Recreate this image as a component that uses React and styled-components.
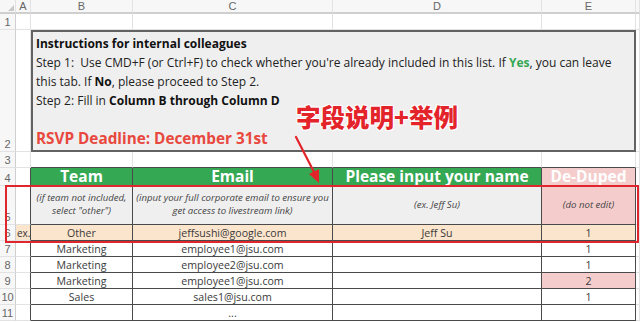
import React from "react";
import styled, { createGlobalStyle } from "styled-components";

const Global = createGlobalStyle`
  html, body { margin: 0; padding: 0; background: #fff; }
  body { font-family: "Open Sans", "Liberation Sans", sans-serif; }
`;

const DARK = "#4a4a4a";
const GRID = "#e2e2e2";

const Page = styled.div`
  position: relative;
  width: 640px;
  height: 322px;
  overflow: hidden;
`;

const Sheet = styled.div`
  display: grid;
  grid-template-columns: 16px 15px 102px 200px 209px 94px 4px;
  grid-template-rows: 14px 16px 122px 16px 18px 39px 16px 16px 16px 16px 16px 16px;
`;

const ColHead = styled.div`
  background: #f7f7f7;
  border-right: 1px solid ${GRID};
  border-bottom: 2px solid #cfcfcf;
  color: #666;
  font-size: 11px;
  line-height: 12px;
  text-align: center;
  font-family: "Liberation Sans", Arial, sans-serif;
`;

const RowNum = styled.div`
  background: #f7f7f7;
  border-right: 1px solid #cfcfcf;
  border-bottom: 1px solid ${GRID};
  color: #666;
  font-size: 11px;
  font-family: "Liberation Sans", Arial, sans-serif;
  display: flex;
  align-items: flex-end;
  justify-content: center;
  padding-bottom: 1px;
  box-sizing: border-box;
`;

const Cell = styled.div`
  box-sizing: border-box;
  background: ${(p) => p.$bg || "#fff"};
  border-right: 1px solid ${(p) => p.$rb || GRID};
  border-bottom: 1px solid ${(p) => p.$bb || GRID};
  color: ${(p) => p.$color || "#333"};
  font-size: ${(p) => (p.$left ? "10px" : "11px")};
  display: flex;
  align-items: center;
  justify-content: ${(p) => (p.$left ? "flex-start" : "center")};
  padding-left: ${(p) => (p.$left ? "1px" : "0")};
  white-space: nowrap;
  overflow: ${(p) => (p.$left ? "visible" : "hidden")};
`;

const HeadCell = styled(Cell)`
  background: ${(p) => p.$bg || "#34a853"};
  color: #fff;
  font-weight: 700;
  font-size: 15.5px;
  line-height: 17px;
  overflow: visible;
  border-right-color: ${DARK};
  border-bottom-color: ${DARK};
`;

const Note = styled(Cell)`
  background: ${(p) => p.$bg || "#efefef"};
  color: #444;
  font-style: italic;
  font-size: 9.6px;
  line-height: 13px;
  text-align: center;
  white-space: normal;
  border-right-color: ${DARK};
  border-bottom-color: ${DARK};
  padding-bottom: 2px;
`;

const Data = styled(Cell)`
  border-right-color: ${DARK};
  border-bottom-color: ${DARK};
  font-size: 10.6px;
  color: #3a3a3a;
`;

const Box = styled.div`
  grid-column: 3 / 7;
  box-sizing: border-box;
  background: #efefef;
  border: 2px solid #626262;
  padding: 2px 3px;
  font-size: 12px;
  line-height: 19px;
  color: #222;
`;

const Line = styled.div`
  white-space: nowrap;
  height: 19px;
`;

const B = styled.b`
  font-weight: 700;
  color: ${(p) => p.$color || "#111"};
`;

const Deadline = styled.div`
  margin-top: 19px;
  font-size: 15.3px;
  font-weight: 700;
  color: #e8483d;
`;

const Label = styled.div`
  position: absolute;
  left: 296px;
  top: 102px;
  font-family: "Noto Sans CJK SC", sans-serif;
  font-weight: 900;
  font-size: 24.5px;
  line-height: 30px;
  color: #e3242b;
  text-shadow: 1px 1px 0 #fff, -1px -1px 0 #fff, 1px -1px 0 #fff, -1px 1px 0 #fff;
`;

const Arrow = styled.svg`
  position: absolute;
  left: 290px;
  top: 132px;
`;

const RedFrame = styled.div`
  position: absolute;
  left: 5px;
  top: 185px;
  width: 634px;
  height: 58px;
  box-sizing: border-box;
  border: 2px solid #e0262c;
`;

const Corner = styled.div`
  position: absolute;
  left: 8px;
  top: 5px;
  width: 0;
  height: 0;
  border-left: 6px solid transparent;
  border-bottom: 6px solid #c8c8c8;
`;

const cols = ["", "A", "B", "C", "D", "E", ""];

const rows = [
  ["Marketing", "employee1@jsu.com", "", "1"],
  ["Marketing", "employee2@jsu.com", "", "1"],
  ["Marketing", "employee1@jsu.com", "", "2", "#f4cccc"],
  ["Sales", "sales1@jsu.com", "", "1"],
  ["", "...", "", ""],
];

export default function App() {
  return (
    <Page>
      <Global />
      <Sheet>
        {cols.map((c, i) => (
          <ColHead key={"h" + i}>{c}</ColHead>
        ))}

        <RowNum>1</RowNum>
        <Cell />
        <Cell />
        <Cell />
        <Cell />
        <Cell />
        <Cell />

        <RowNum>2</RowNum>
        <Cell />
        <Box>
          <Line>
            <B>Instructions for internal colleagues</B>
          </Line>
          <Line>
            Step 1:&nbsp; Use CMD+F (or Ctrl+F) to check whether you're already included in this list. If{" "}
            <B $color="#34a853">Yes</B>, you can leave
          </Line>
          <Line>
            this tab. If <B>No</B>, please proceed to Step 2.
          </Line>
          <Line>
            Step 2: Fill in <B>Column B through Column D</B>
          </Line>
          <Deadline>RSVP Deadline: December 31st</Deadline>
        </Box>
        <Cell />

        <RowNum>3</RowNum>
        <Cell />
        <Cell $bb={DARK} />
        <Cell $bb={DARK} />
        <Cell $bb={DARK} />
        <Cell $bb={DARK} />
        <Cell />

        <RowNum>4</RowNum>
        <Cell $rb={DARK} />
        <HeadCell>Team</HeadCell>
        <HeadCell>Email</HeadCell>
        <HeadCell>Please input your name</HeadCell>
        <HeadCell $bg="#f4cccc">De-Duped</HeadCell>
        <Cell />

        <RowNum>5</RowNum>
        <Cell $rb={DARK} />
        <Note>
          (if team not included,
          <br />
          select "other")
        </Note>
        <Note>
          (input your full corporate email to ensure you
          <br />
          get access to livestream link)
        </Note>
        <Note>(ex. Jeff Su)</Note>
        <Note $bg="#f4cccc">(do not edit)</Note>
        <Cell />

        <RowNum>6</RowNum>
        <Cell $rb={DARK} $bg="#fce5cd" $left>
          ex.
        </Cell>
        <Data $bg="#fce5cd">Other</Data>
        <Data $bg="#fce5cd">jeffsushi@google.com</Data>
        <Data $bg="#fce5cd">Jeff Su</Data>
        <Data $bg="#fce5cd">1</Data>
        <Cell />

        {rows.map((r, i) => (
          <React.Fragment key={i}>
            <RowNum>{7 + i}</RowNum>
            <Cell $rb={DARK} />
            <Data>{r[0]}</Data>
            <Data>{r[1]}</Data>
            <Data>{r[2]}</Data>
            <Data $bg={r[4]}>{r[3]}</Data>
            <Cell />
          </React.Fragment>
        ))}
      </Sheet>

      <Corner />
      <Label>字段说明+举例</Label>
      <Arrow width="40" height="56" viewBox="0 0 40 56">
        <line x1="6" y1="5" x2="25" y2="42" stroke="#e3242b" strokeWidth="2.2" strokeLinecap="round" />
        <polygon points="29,51 19,42 29,37" fill="#e3242b" />
      </Arrow>
      <RedFrame />
    </Page>
  );
}
